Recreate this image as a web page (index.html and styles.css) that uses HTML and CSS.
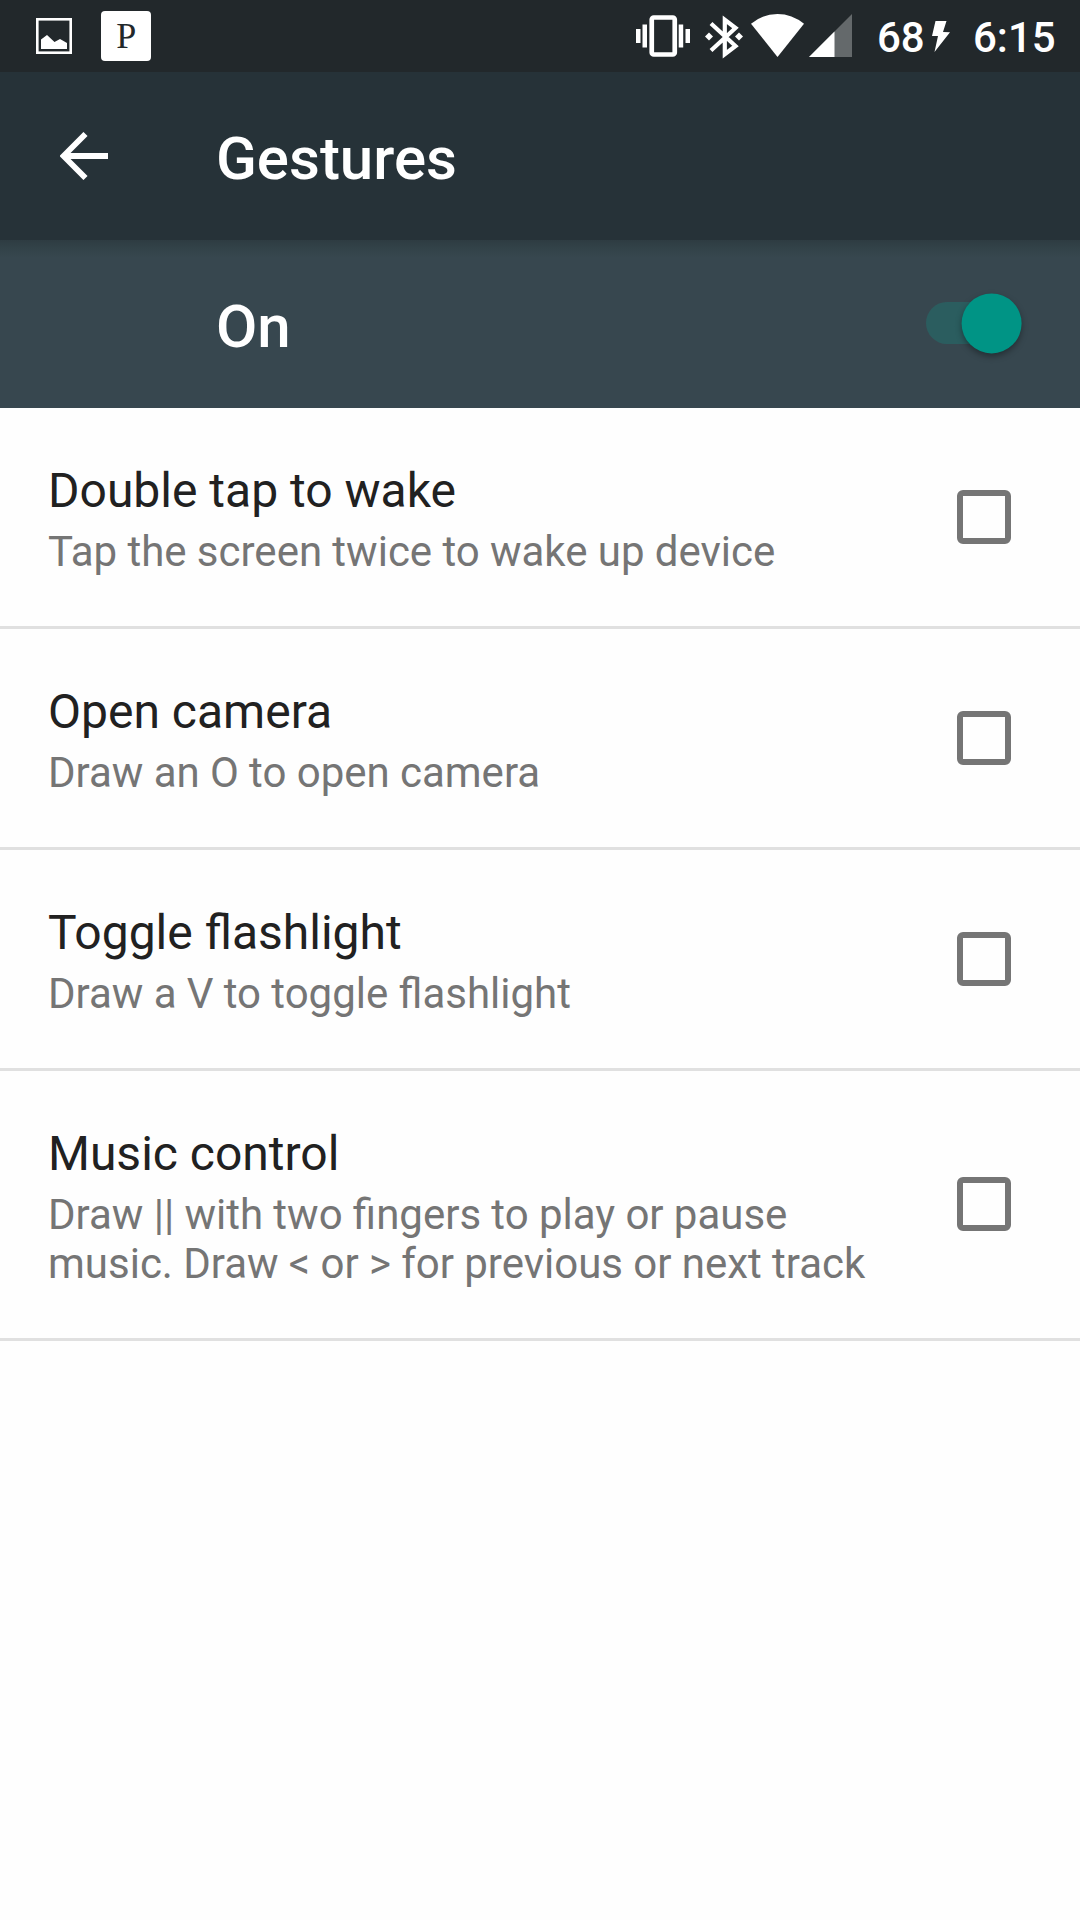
FILE: index.html
```html
<!DOCTYPE html>
<html lang="en">
<head>
<meta charset="utf-8">
<title>Gestures</title>
<link rel="stylesheet" href="styles.css">
</head>
<body>
<div class="status">
  <svg class="picture" width="36" height="36" viewBox="0 0 36 36"><rect x="1.3" y="1.3" width="33.4" height="33.4" fill="none" stroke="#fff" stroke-width="2.6"/><path fill="#fff" d="M5 31V21.500L11 17L18.500 24L24 21L31 25V31Z"/></svg>
  <div class="badge">P</div>
  <div class="spacer"></div>
  <svg class="vibrate" width="54" height="42" viewBox="0 0 54 42"><path fill="#fff" d="M0 14h4.500v14H0zM6.500 9.500H11v23H6.500zM42.700 9.500h4.500v23h-4.500zM49.500 14H54v14h-4.500z"/><rect x="15.750" y="2.500" width="23" height="37" rx="2" fill="none" stroke="#fff" stroke-width="4.700"/></svg>
  <svg class="bluetooth" width="38" height="44" viewBox="0 0 38 44"><path d="M6 8.500L30.500 31 19.800 39.200V4.800L30.500 13 6 35.500" fill="none" stroke="#fff" stroke-width="4.200"/><path fill="#fff" d="M4 17.500l4 4-4 4-4-4zM34 17.500l4 4-4 4-4-4z"/></svg>
  <svg class="wifi" width="53" height="43" viewBox="0 0 53 43"><path fill="#fff" d="M26.500 43L0 9.800Q12 0 26.500 0T53 9.800Z"/></svg>
  <svg class="signal" width="43" height="43" viewBox="0 0 43 43"><path fill="#64696b" d="M0 43L43 0V43Z"/><path fill="#fff" d="M0 43L25.500 17.500V43Z"/></svg>
  <span class="battery">68</span>
  <svg class="bolt" width="18" height="31" viewBox="0 0 18 31"><path fill="#fff" d="M3.500 0H14.500L11 11L18 11.300L2.500 31L6 15H0Z"/></svg>
  <span class="clock">6:15</span>
</div>
<header class="appbar">
  <svg class="back" width="48" height="48" viewBox="0 0 48 48"><path d="M48 24H4M25.500 2L3.500 24L25.500 46" fill="none" stroke="#fff" stroke-width="5.800"/></svg>
  <h1 class="heading">Gestures</h1>
</header>
<div class="master">
  <span class="heading">On</span>
  <div class="switch"><div class="thumb"></div></div>
</div>
<main>
  <div class="row"><div class="label"><div class="title">Double tap to wake</div><div class="summary">Tap the screen twice to wake up device</div></div><div class="checkbox"></div></div>
  <div class="row"><div class="label"><div class="title">Open camera</div><div class="summary">Draw an O to open camera</div></div><div class="checkbox"></div></div>
  <div class="row"><div class="label"><div class="title">Toggle flashlight</div><div class="summary">Draw a V to toggle flashlight</div></div><div class="checkbox"></div></div>
  <div class="row"><div class="label"><div class="title">Music control</div><div class="summary">Draw || with two fingers to play or pause<br>music. Draw &lt; or &gt; for previous or next track</div></div><div class="checkbox"></div></div>
</main>
</body>
</html>
```
FILE: styles.css
```css
* { box-sizing: border-box; }
body {
  margin: 0;
  width: 1080px;
  min-height: 1920px;
  background: #fefefe;
  font-family: Roboto, sans-serif;
  color: #212121;
}
svg { display: block; flex: none; }

.status {
  display: flex;
  align-items: flex-start;
  height: 72px;
  padding: 0 23px 0 36px;
  background: #22282b;
  color: #fff;
  font-size: 42px;
  font-weight: 500;
  line-height: 50px;
}
.picture { margin-top: 18px; }
.badge {
  width: 49.500px;
  height: 49.500px;
  margin: 11.300px 0 0 29.400px;
  border-radius: 4px;
  background: #fff;
  color: #22282b;
  font: 36px/51px "Liberation Serif", serif;
  text-align: center;
}
.spacer { flex: 1; }
.vibrate { margin: 15px 15px 0 0; }
.bluetooth { margin: 15px 8px 0 0; }
.wifi { margin: 14px 5px 0 0; }
.signal { margin: 14px 25px 0 0; }
.battery { width: 48px; margin: 13px 7px 0 0; }
.bolt { margin: 21px 23px 0 0; }
.clock { width: 84px; margin-top: 13px; white-space: nowrap; }

.appbar {
  display: flex;
  align-items: flex-start;
  height: 168px;
  padding-left: 60px;
  background: #263238;
}
.back { margin: 60px 108px 0 0; }
.heading {
  margin: 52px 0 0;
  color: #fff;
  font-size: 60px;
  font-weight: 500;
  line-height: 70px;
}

.master {
  display: flex;
  justify-content: space-between;
  align-items: flex-start;
  height: 168px;
  padding: 0 58px 0 216px;
  background: linear-gradient(#2e3c42, #334349 9px, #37474f 18px);
}
.switch {
  display: flex;
  justify-content: flex-end;
  align-items: center;
  width: 96px;
  height: 42px;
  margin-top: 62px;
  border-radius: 21px;
  background: linear-gradient(90deg, #2b5d5f 70px, transparent 70px);
}
.thumb {
  flex: none;
  width: 60px;
  height: 60px;
  border-radius: 50%;
  background: #009485;
  box-shadow: 0 3px 6px rgba(0, 0, 0, .35);
  transform: translate(-.4px, .4px);
}

.row {
  display: flex;
  justify-content: space-between;
  align-items: center;
  padding: 54px 69px 50px 48px;
  border-bottom: 3px solid #e0e0e0;
}
.title { font-size: 48px; line-height: 57px; }
.summary {
  margin-top: 8px;
  color: #757575;
  font-size: 42px;
  line-height: 49px;
  word-spacing: -.15px;
}
.checkbox {
  width: 54px;
  height: 54px;
  margin-top: -5px;
  border: 6px solid #757575;
  border-radius: 6px;
}
```
